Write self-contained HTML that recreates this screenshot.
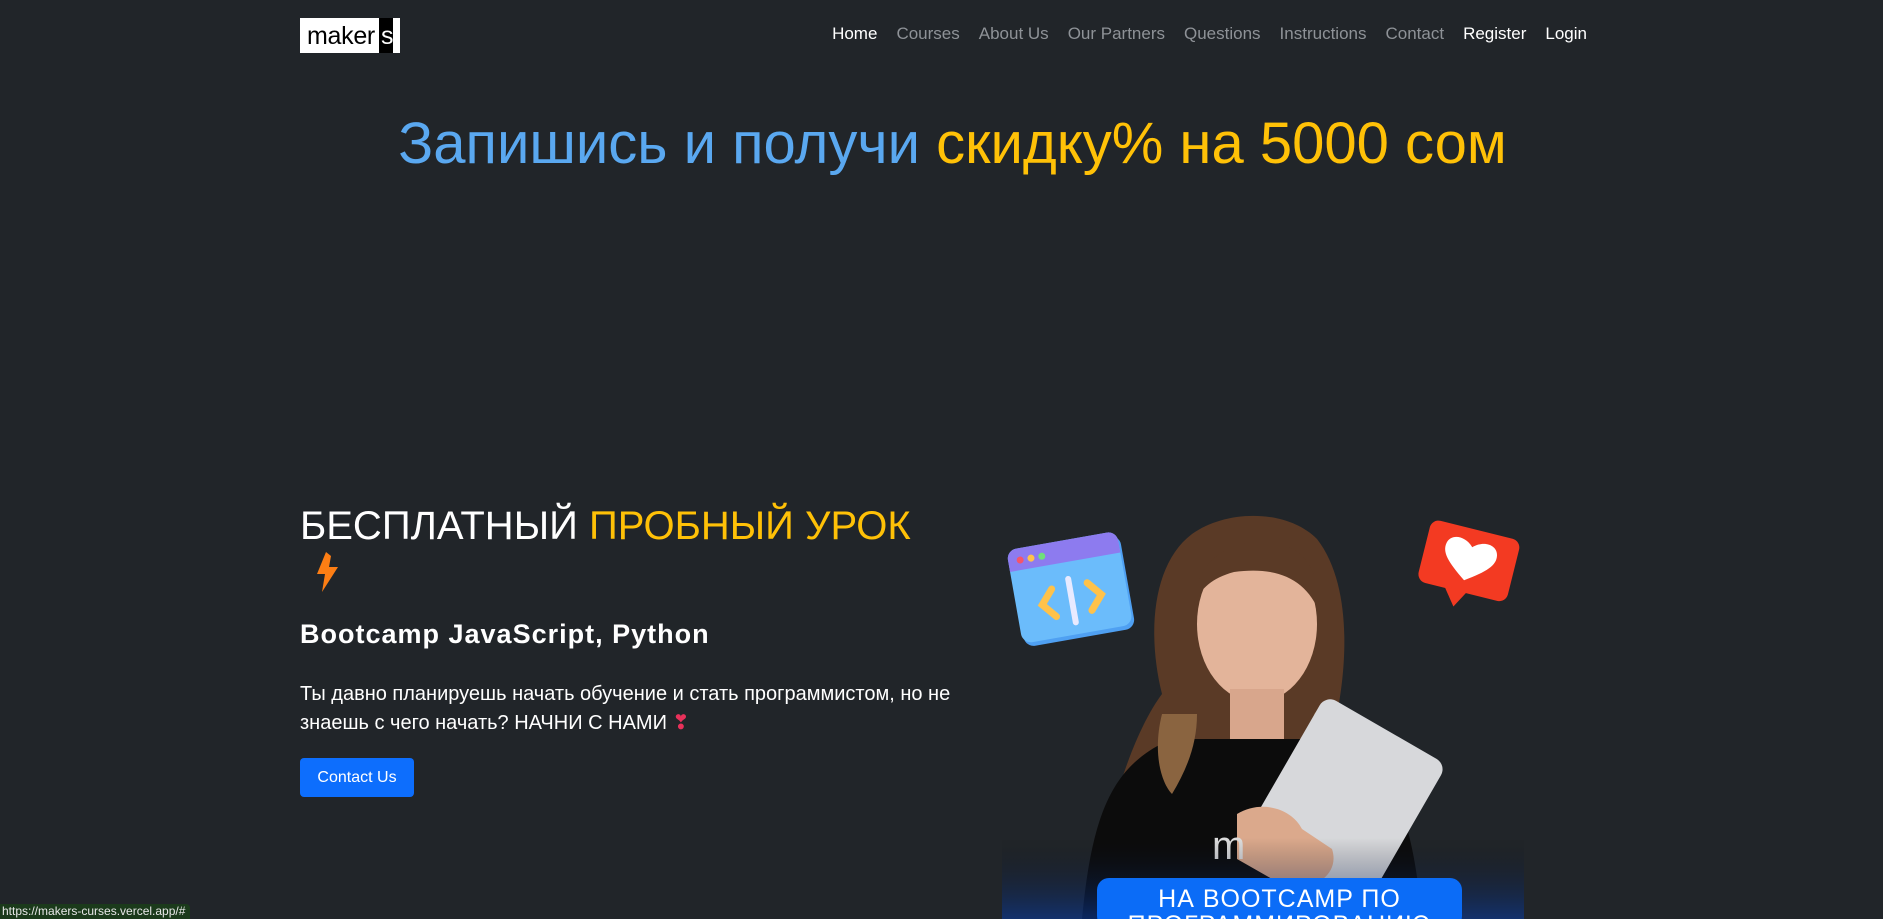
<!DOCTYPE html>
<html><head><meta charset="utf-8"><style>
*{margin:0;padding:0;box-sizing:border-box}
html,body{width:1883px;height:919px;overflow:hidden;background:#212529;font-family:"Liberation Sans",sans-serif;position:relative}
.abs{position:absolute}
.logo{left:300px;top:18px;width:100px;height:35px;background:#fff;}
.logo span{position:absolute;left:7px;top:4px;font-size:25px;color:#000;letter-spacing:-0.3px}
.logo b{position:absolute;left:79px;top:0;width:14px;height:35px;background:#000}
.logo i{position:absolute;left:81px;top:4px;font-style:normal;font-size:25px;color:#fff}
nav{position:absolute;top:24px;right:296px;display:flex;gap:19px;font-size:17px;color:#8e9297;white-space:nowrap}
nav .w{color:#fff}
h1{position:absolute;top:110px;left:0;width:1883px;text-align:center;font-weight:normal;font-size:58px;color:#5aa8f0;white-space:nowrap;padding-left:22px}
h1 span{color:#ffc107}
.h2{left:300px;top:504px;font-size:40px;color:#fff;white-space:nowrap}
.h2 span{color:#ffc107}
.h3{left:300px;top:619px;font-size:27px;color:#fff;font-weight:bold;letter-spacing:1px}
.p{left:300px;top:680px;width:700px;font-size:20px;line-height:29px;color:#fff}
.btn{left:300px;top:758px;width:114px;height:39px;background:#0d6efd;border-radius:4px;color:#fff;font-size:16px;text-align:center;line-height:39px}
.status{left:0;top:904px;width:190px;height:15px;background:#1b3a1b;color:#e8e8e8;font-size:12px;line-height:15px;padding-left:2px;border-top-right-radius:4px;white-space:nowrap;overflow:hidden}
.banner{left:1097px;top:878px;width:365px;height:50px;background:#0b6cf7;border-radius:12px;color:#fff;text-align:center;font-size:25px;letter-spacing:1px;line-height:26px;padding-top:8px}
</style></head><body>
<div class="abs logo"><span>maker</span><b></b><i>s</i></div>
<nav><span class="w">Home</span><span>Courses</span><span>About Us</span><span>Our Partners</span><span>Questions</span><span>Instructions</span><span>Contact</span><span class="w">Register</span><span class="w">Login</span></nav>
<h1>Запишись и получи <span>скидку% на 5000 сом</span></h1>
<div class="abs h2">БЕСПЛАТНЫЙ <span>ПРОБНЫЙ УРОК</span></div>
<svg class="abs" style="left:314px;top:552px" width="26" height="40" viewBox="0 0 26 40"><path d="M12 0 L3 22 H11 L8 40 L24 15 H15 L17 4 Z" fill="#fd7e14"/></svg>
<div class="abs h3">Bootcamp JavaScript, Python</div>
<div class="abs p">Ты давно планируешь начать обучение и стать программистом, но не знаешь с чего начать? НАЧНИ С НАМИ <span style="color:#e8315a">❣</span></div>
<div class="abs btn">Contact Us</div>
<svg class="abs" style="left:1002px;top:514px" width="522" height="405" viewBox="0 0 522 405">
<defs><linearGradient id="fade" x1="0" y1="0" x2="0" y2="1"><stop offset="0.8" stop-color="#0a0a0c" stop-opacity="0"/><stop offset="1" stop-color="#0a3a9a" stop-opacity="0.6"/></linearGradient></defs>
<g transform="rotate(-10 66 64)">
<rect x="12" y="30" width="112" height="95" rx="10" fill="#4fa0f2"/>
<rect x="10" y="26" width="112" height="95" rx="10" fill="#6bbcfb"/>
<path d="M10 36 a10 10 0 0 1 10 -10 h92 a10 10 0 0 1 10 10 v12 h-112z" fill="#8d7bef"/>
<circle cx="22" cy="38" r="3.5" fill="#f5556b"/><circle cx="33" cy="38" r="3.5" fill="#ffc24a"/><circle cx="44" cy="38" r="3.5" fill="#6fe07a"/>
<path d="M48 72 L36 86 L48 100" stroke="#ffc24a" stroke-width="7" fill="none" stroke-linecap="round"/>
<path d="M84 72 L96 86 L84 100" stroke="#ffc24a" stroke-width="7" fill="none" stroke-linecap="round"/>
<rect x="63" y="62" width="6" height="50" rx="3" fill="#e8eaff"/>
</g>
<g transform="rotate(14 463 50)">
<rect x="420" y="14" width="92" height="64" rx="9" fill="#f33a22"/>
<path d="M448 76 L462 94 L472 76z" fill="#f33a22"/>
<path d="M466 66 C446 52 438 44 440 34 C442 24 456 22 466 32 C476 22 490 24 492 34 C494 44 486 52 466 66z" fill="#fff"/>
</g>
<path d="M110 300 C125 240 145 200 160 180 C145 120 150 50 190 20 C225 -5 285 -5 315 25 C350 70 345 150 335 200 C365 230 385 260 395 300 L400 330 L110 330Z" fill="#5a3a26"/>
<path d="M80 405 C90 300 110 250 170 225 L340 225 C390 250 410 300 420 405Z" fill="#0c0c0c"/>
<ellipse cx="255" cy="110" rx="60" ry="78" fill="#e3b49a"/>
<path d="M228 175 h54 v50 h-54z" fill="#d8a68c"/>
<path d="M192 90 C195 40 235 25 268 28 C305 32 318 60 318 100 C305 65 275 52 232 58 C210 64 198 75 192 90z" fill="#5a3a26"/>
<path d="M160 200 C150 240 160 270 170 280 C185 255 195 230 195 200z" fill="#8a6440"/>
<path d="M320 190 C340 230 345 255 340 270 C325 250 315 225 312 200z" fill="#7a5436"/>
<g transform="rotate(30 330 300)"><rect x="265" y="200" width="140" height="185" rx="12" fill="#d7d8db"/></g>
<path d="M235 300 C260 285 290 295 300 315 L330 335 C340 365 300 385 270 365 L235 345z" fill="#dba98c"/>
<text x="210" y="345" font-family="Liberation Sans" font-size="40" fill="#ddd">m</text>
<rect x="0" y="0" width="522" height="405" fill="url(#fade)"/>
</svg>
<div class="abs banner">НА BOOTCAMP ПО<br>ПРОГРАММИРОВАНИЮ</div>
<div class="abs status">https://makers-curses.vercel.app/#</div>
</body></html>
